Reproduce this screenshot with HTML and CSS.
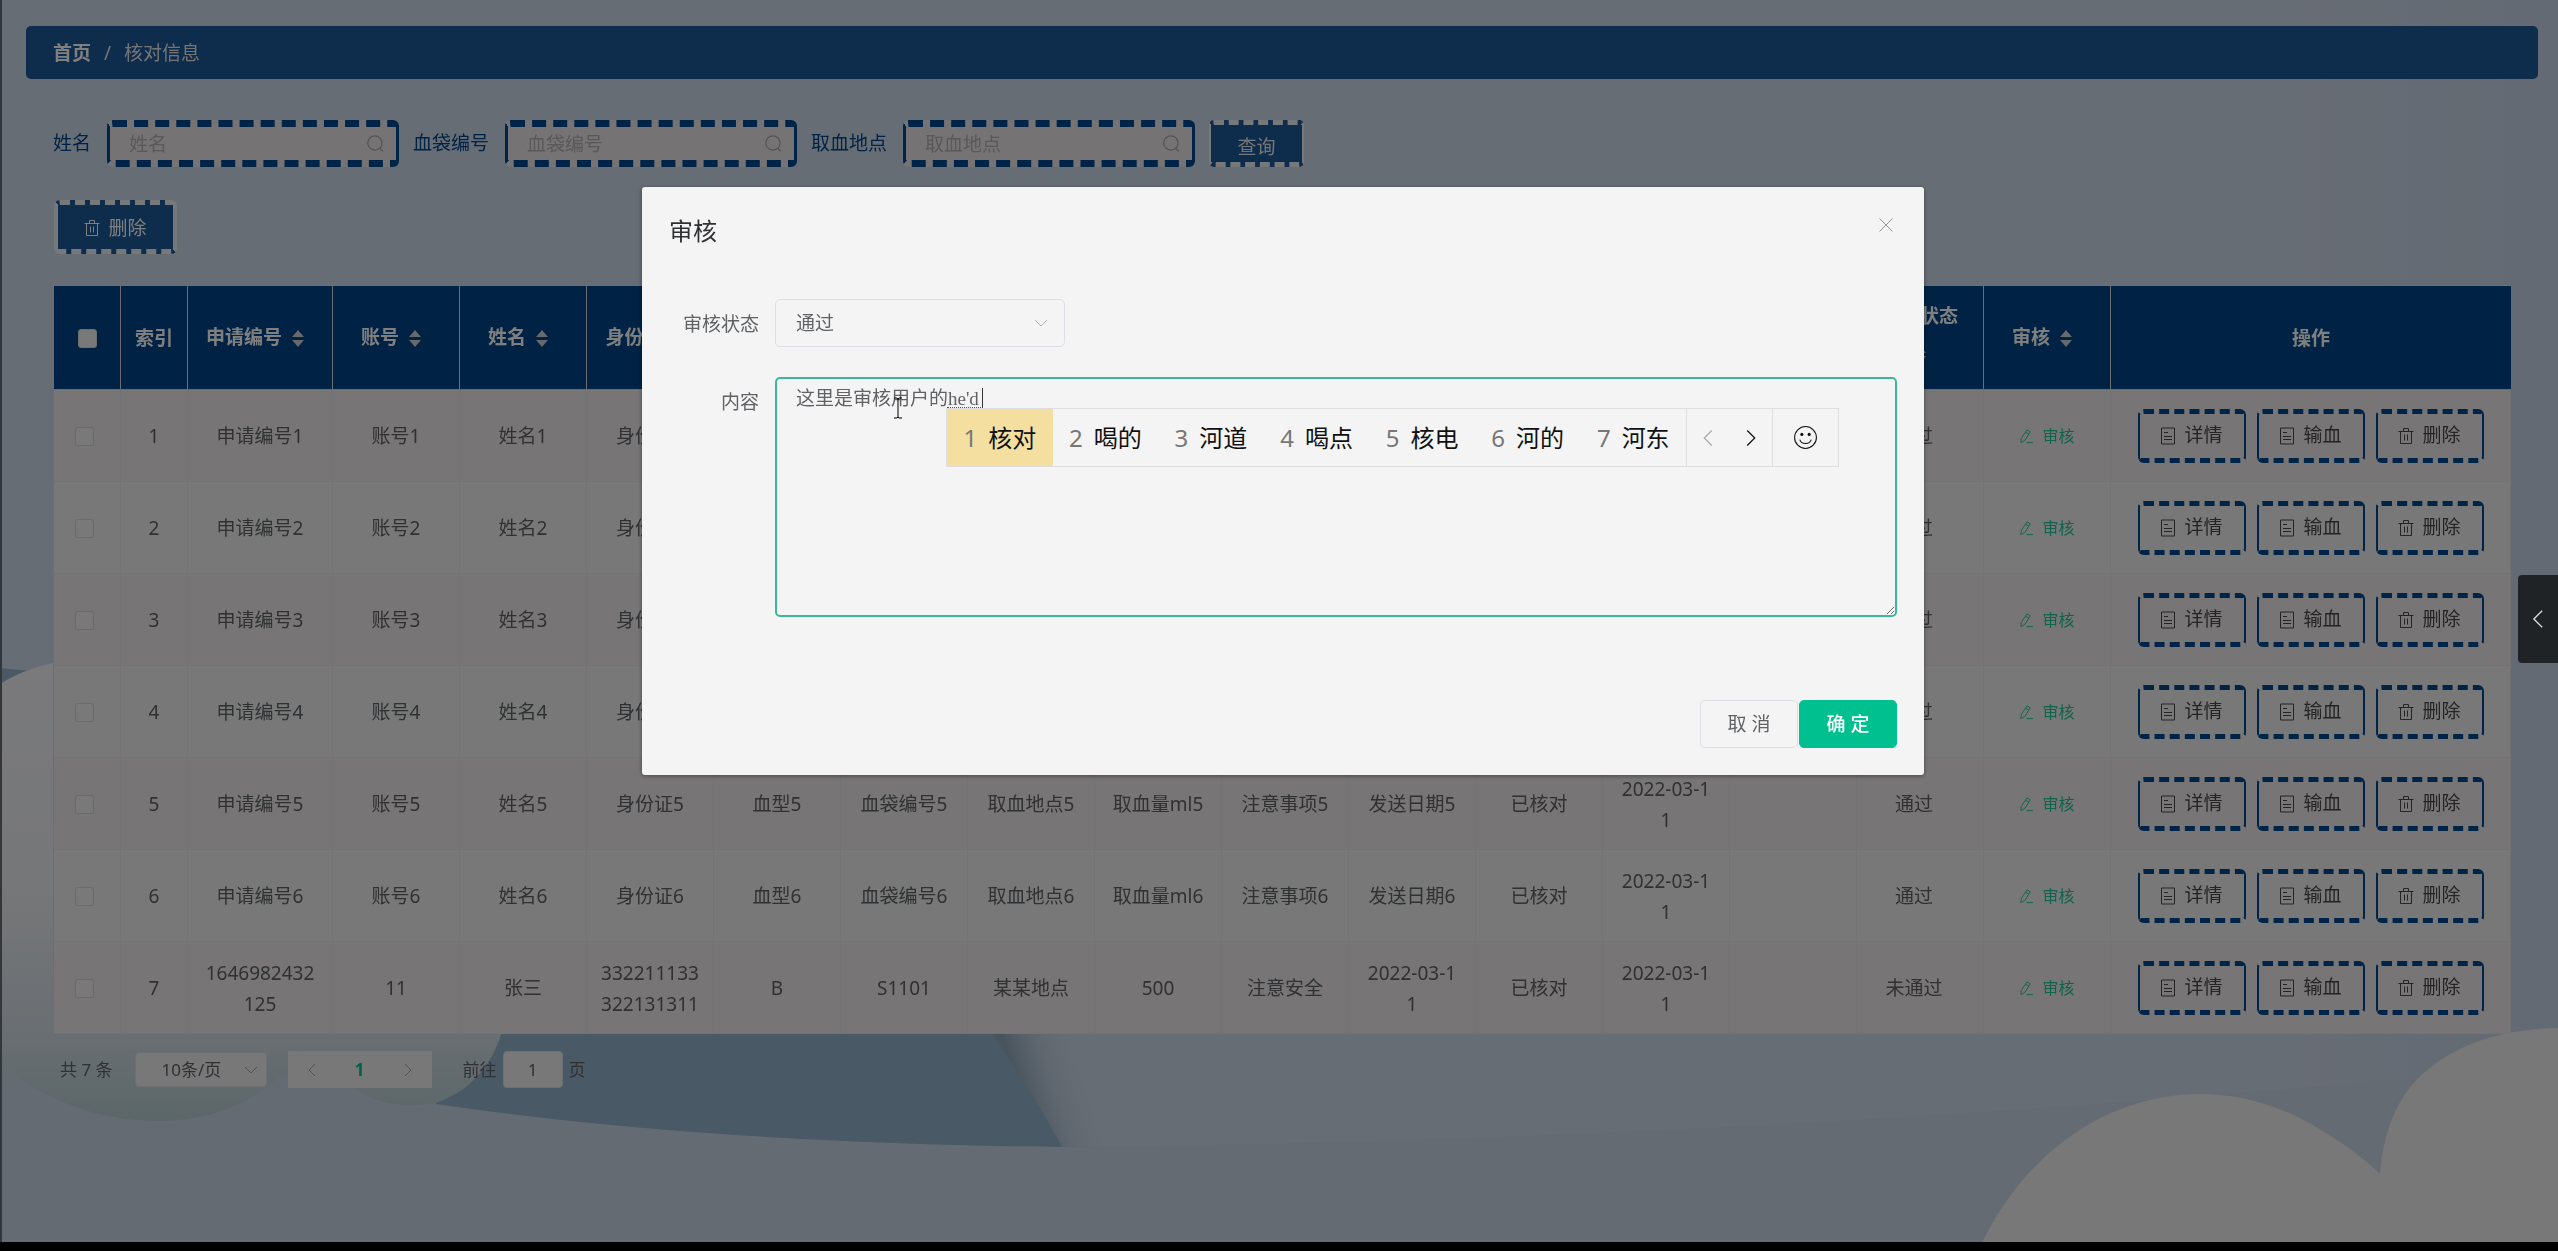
FILE: index.html
```html
<!DOCTYPE html>
<html lang="zh-CN">
<head>
<meta charset="UTF-8">
<meta name="viewport" content="width=device-width,initial-scale=1">
<title>核对信息</title>
<link rel="stylesheet" href="styles.css">
</head>
<body>

<svg class="icon-defs" width="0" height="0" aria-hidden="true">
  <symbol id="i-search" viewBox="0 0 16 16"><circle cx="7.500" cy="7.500" r="6"/><path d="M11.500 12L14 14.500"/></symbol>
  <symbol id="i-trash" viewBox="0 0 16 18"><path d="M.5 4.500h15M5.500 4.500V1.500h5v3M2.500 4.500v12h11v-12M6.500 7.500v6M9.500 7.500v6"/></symbol>
  <symbol id="i-doc" viewBox="0 0 16 18"><path d="M1.500 1h13v16h-13zM4 5.500h4M4 9.500h8M4 12.500h8"/></symbol>
  <symbol id="i-edit" viewBox="0 0 16 16"><path d="M8.500 1l3.500 2L6 12.500l-4 2 .5-4.500zM7 3.500l3.500 2M8 14.500h7"/></symbol>
  <symbol id="i-down" viewBox="0 0 16 16"><path d="M2 5l6 6 6-6"/></symbol>
  <symbol id="i-left" viewBox="0 0 16 16"><path d="M11 2L5 8l6 6"/></symbol>
  <symbol id="i-right" viewBox="0 0 16 16"><path d="M5 2l6 6-6 6"/></symbol>
  <symbol id="i-close" viewBox="0 0 16 16"><path d="M1.500 1.500l13 13M14.500 1.500l-13 13"/></symbol>
  <symbol id="i-smile" viewBox="0 0 24 24"><circle cx="12" cy="12" r="10.500"/><path d="M6.500 14c1.500 5 9.500 5 11 0"/><circle class="dot" cx="8.500" cy="9" r="1.500"/><circle class="dot" cx="15.500" cy="9" r="1.500"/></symbol>
</svg>

<!-- sky and clouds -->
<svg class="scene" viewBox="0 0 2558 1251" preserveAspectRatio="none" aria-hidden="true">
  <defs>
    <linearGradient id="side" x1="0" x2="1" y1="0" y2="0">
      <stop offset="0" stop-color="#cddaea"/><stop offset=".9" stop-color="#cfdaea"/><stop offset="1" stop-color="#c6d4e6"/>
    </linearGradient>
    <linearGradient id="bubble" gradientUnits="userSpaceOnUse" x1="0" x2="0" y1="660" y2="1121">
      <stop offset="0" stop-color="#f4f4f8"/><stop offset=".5" stop-color="#eceef2"/>
      <stop offset=".8" stop-color="#d4dee6"/><stop offset="1" stop-color="#b8ced4"/>
    </linearGradient>
    <linearGradient id="haze" gradientUnits="userSpaceOnUse" x1="1020" y1="1090" x2="1085" y2="1070">
      <stop offset="0" stop-color="#92aabc"/><stop offset="1" stop-color="#cfdaea" stop-opacity="0"/>
    </linearGradient>
  </defs>
  <rect width="2558" height="1251" fill="url(#side)"/>
  <path d="M0 1000Q500 1147 1070 1147Q1800 1140 2558 1064V1251H0z" fill="#cad6e6"/>
  <path d="M0 668L60 674V700H0z" fill="#92b2cc"/>
  <path d="M968 1000H1060Q1070 1090 1130 1148L1062 1147Q1020 1080 968 1000z" fill="url(#haze)"/>
  <path d="M400 1000H968Q1026 1080 1062 1147Q700 1143 436 1104z" fill="#92b2cc"/>
  <path d="M250 1000H508Q500 1080 436 1103Q385 1112 350 1086Q310 1060 307 1042Q295 1060 285 1075L250 1060z" fill="url(#bubble)"/>
  <path d="M0 684Q28 666 70 660V1000H310Q312 1030 290 1066Q240 1121 159 1121Q70 1121 0 1064z" fill="url(#bubble)"/>
  <path d="M1978 1251Q2020 1160 2100 1118Q2200 1070 2300 1118Q2350 1145 2380 1174Q2384 1120 2411 1086Q2460 1030 2558 1028V1251z" fill="#f0f0f0"/>
</svg>

<main class="page">
  <nav class="breadcrumb"><a href="#">首页</a><span class="sep">/</span><span>核对信息</span></nav>

  <div class="content">
    <form class="filters">
      <label for="fName">姓名</label>
      <div class="search"><input id="fName" type="text" placeholder="姓名"><svg><use href="#i-search"/></svg></div>
      <label for="fBag">血袋编号</label>
      <div class="search"><input id="fBag" type="text" placeholder="血袋编号"><svg><use href="#i-search"/></svg></div>
      <label for="fPlace">取血地点</label>
      <div class="search"><input id="fPlace" type="text" placeholder="取血地点"><svg><use href="#i-search"/></svg></div>
      <button type="button" class="btn-query">查询</button>
    </form>

    <button type="button" class="btn-delete"><svg><use href="#i-trash"/></svg>删除</button>

    <table class="list">
      <colgroup id="cols"></colgroup>
      <thead><tr id="head"></tr></thead>
      <tbody id="rows"></tbody>
    </table>

    <div class="pagination">
      <span class="total">共 7 条</span>
      <div class="size">
        <select aria-label="每页条数"><option>10条/页</option></select>
        <svg><use href="#i-down"/></svg>
      </div>
      <div class="pager">
        <button type="button" aria-label="上一页"><svg><use href="#i-left"/></svg></button>
        <button type="button" class="active">1</button>
        <button type="button" aria-label="下一页"><svg><use href="#i-right"/></svg></button>
      </div>
      <label for="jump">前往</label>
      <input id="jump" type="text" value="1">
      <span>页</span>
    </div>
  </div>
</main>

<div class="mask">
  <section class="dialog" role="dialog" aria-labelledby="dlgTitle">
    <header>
      <h2 id="dlgTitle">审核</h2>
      <button type="button" class="close" aria-label="关闭"><svg><use href="#i-close"/></svg></button>
    </header>
    <div class="dialog-body">
      <div class="form-item">
        <label for="state">审核状态</label>
        <div class="select">
          <select id="state"><option>通过</option></select>
          <svg><use href="#i-down"/></svg>
        </div>
      </div>
      <div class="form-item">
        <label for="reply">内容</label>
        <div class="reply">
          <textarea id="reply" spellcheck="false">这里是审核用户的he'd</textarea>
          <i class="composing"></i>
          <svg class="ibeam" viewBox="0 0 10 22"><path d="M1 1h3l1 1 1-1h3M5 2v18M1 21h3l1-1 1 1h3"/></svg>
          <div class="ime">
            <span class="cand on"><b>1</b>核对</span>
            <span class="cand"><b>2</b>喝的</span>
            <span class="cand"><b>3</b>河道</span>
            <span class="cand"><b>4</b>喝点</span>
            <span class="cand"><b>5</b>核电</span>
            <span class="cand"><b>6</b>河的</span>
            <span class="cand"><b>7</b>河东</span>
            <span class="turn">
              <button type="button" class="off" aria-label="上一组"><svg><use href="#i-left"/></svg></button>
              <button type="button" aria-label="下一组"><svg><use href="#i-right"/></svg></button>
            </span>
            <button type="button" class="face" aria-label="表情"><svg><use href="#i-smile"/></svg></button>
          </div>
        </div>
      </div>
    </div>
    <footer>
      <button type="button">取 消</button>
      <button type="button" class="primary">确 定</button>
    </footer>
  </section>
</div>

<button type="button" class="drawer" aria-label="展开"><svg><use href="#i-left"/></svg></button>
<div class="bottom-bar"></div>

<script>
  const heads = ['申请编号','账号','姓名','身份证','血型','血袋编号','取血地点','取血量ml','注意事项','发送日期','核对状态','核对日期','审核回复','审核状态','审核'];
  const data = [];
  for (let i = 1; i <= 6; i++) {
    data.push(['申请编号'+i,'账号'+i,'姓名'+i,'身份证'+i,'血型'+i,'血袋编号'+i,'取血地点'+i,'取血量ml'+i,'注意事项'+i,'发送日期'+i,'已核对','2022-03-11','','通过']);
  }
  data.push(['1646982432125','11','张三','332211133322131311','B','S1101','某某地点','500','注意安全','2022-03-11','已核对','2022-03-11','','未通过']);

  const icon = n => `<svg><use href="#i-${n}"/></svg>`;
  const btn = (n, t) => `<button type="button" class="op">${icon(n)}${t}</button>`;

  document.getElementById('cols').innerHTML =
    '<col class="w-s"><col class="w-s"><col class="w-m">' + '<col>'.repeat(14) + '<col class="w-l">';

  document.getElementById('head').innerHTML =
    '<th class="pick"><input type="checkbox" aria-label="全选"></th><th class="idx">索引</th>' +
    heads.map(h => `<th>${h}<span class="sort"><i class="up"></i><i class="down"></i></span></th>`).join('') +
    '<th>操作</th>';

  document.getElementById('rows').innerHTML = data.map((r, i) =>
    `<tr><td class="pick"><input type="checkbox" aria-label="选择${i + 1}"></td><td class="idx">${i + 1}</td>` +
    r.map((c, n) => `<td${n == 13 ? ' class="state"' : ''}>${c}</td>`).join('') +
    `<td><a class="audit" href="#">${icon('edit')}审核</a></td>` +
    `<td class="act"><div class="ops">${btn('doc','详情')}${btn('doc','输血')}${btn('trash','删除')}</div></td></tr>`
  ).join('');
</script>

</body>
</html>
```
FILE: styles.css
```css
* { box-sizing:border-box; }
html,body { margin:0; padding:0; height:100%; overflow:hidden; }
body { background:#cfdaea; font:19px/31px "Noto Sans","Noto Sans CJK SC",sans-serif; color:#606266; border-top:1px solid #777; }
button,input,select,textarea { font:inherit; color:inherit; margin:0; outline:none; }
button { cursor:pointer; display:inline-flex; align-items:center; justify-content:center; padding:0; background:none; border:0; }
a { text-decoration:none; color:inherit; }
svg { fill:none; stroke:currentColor; flex:none; }
svg .dot { fill:currentColor; stroke:none; }
.icon-defs { position:absolute; }
.scene { position:fixed; top:0; left:0; width:100%; height:100%; stroke:none; }

.page { position:relative; padding:25px 20px 0 26px; }
.breadcrumb { display:flex; align-items:center; height:53px; padding:1px 27px 0; border-radius:5px; background:#1c5896; color:#e4e8ec; }
.breadcrumb a { font-weight:bold; color:#fff; }
.breadcrumb .sep { margin:0 13px; }
.content { padding:41px 27px 0 27px; }

.filters { display:flex; align-items:center; color:#004488; }
.filters label { margin-right:16px; }
.search { position:relative; width:292px; margin-right:14px; }
.search input { display:block; width:100%; height:47px; padding:0 40px 0 19px; border:solid #004890; border-width:7px 3px; border-style:dashed solid; border-radius:6px; background:#ebe7e7; }
.search input::placeholder { color:#b4b2b2; opacity:1; }
.search svg { position:absolute; right:14px; top:14px; width:19px; height:19px; color:#a4a4a8; }
.btn-query { width:95px; height:47px; padding-top:8px; border:solid #eef0f2; border-width:5px 2px; border-style:dashed solid; border-radius:5px; background:#1c5896; color:#e8ecf0; }
.btn-delete { width:123px; height:54px; margin:33px 0 31px 1px; padding-top:2px; gap:8px; border:solid #eef0f2; border-width:5px 4px; border-style:dashed solid; border-radius:6px; background:#1c5896; color:#fff; }
.btn-delete svg { width:16px; height:18px; }

.list { width:100%; table-layout:fixed; border-collapse:separate; border-spacing:0; text-align:center; border-top:1px solid #d8dce4; border-left:1px solid #d8dce4; }
.w-s { width:67px; }
.w-m { width:145px; }
.w-l { width:400px; }
.list th { height:104px; padding:14px 13px 12px; border-right:1px solid #d8dce4; border-bottom:1px solid #d8dce4; background:#004488; color:#fff; font-weight:bold; }
.list th:last-child { border-right:0; }
.list td { height:92px; padding:2px 14px 0; border-right:1px solid #e6e4ea; border-bottom:1px solid #e6e4ea; background:#eeebeb; word-break:break-all; }
.list tr:nth-child(even) td { background:#eef0ee; }
.list input { display:block; appearance:none; width:19px; height:19px; margin:0 auto; border:1px solid #dcdcde; border-radius:3px; background:#f4f2f2; }
.list .pick,.list .idx { padding:2px 0 0; }
.list td.pick { padding-right:5px; }
.list td.pick input { border-color:#d4d2d6; }
.list .state { padding-right:26px; }
.list .act { padding:0; }
.sort { display:inline-flex; flex-direction:column; align-items:center; justify-content:center; gap:3px; width:32px; height:45px; vertical-align:middle; }
.sort i { border:solid transparent; border-width:0 6px; }
.sort .up { border-bottom:7px solid #d0d2d6; }
.sort .down { border-top:7px solid #d0d2d6; }
.audit { display:inline-flex; align-items:center; gap:8px; font-size:16px; color:#20c898; }
.audit svg { width:15px; height:15px; }
.ops { display:flex; justify-content:center; gap:11px; }
.op { width:108px; height:54px; gap:8px; border:solid #004890; border-width:5px 2px; border-style:dashed solid; border-radius:6px; color:#484848; }
.op svg { width:16px; height:18px; }

.pagination { display:flex; align-items:center; height:37px; margin-top:17px; padding-left:7px; font-size:17px; }
.pagination svg { width:16px; height:16px; color:#a0a2a8; }
.size { position:relative; width:132px; margin:0 21px 0 22px; }
.size select { display:block; width:100%; height:35px; padding:0 0 0 26px; appearance:none; border:1px solid #dcdfe6; border-radius:4px; background:#f2f0f0; }
.size svg { position:absolute; right:8px; top:10px; }
.pager { display:flex; width:144px; height:37px; margin-right:31px; background:#f2f0f0; }
.pager button { flex:1; }
.pager .active { color:#00c292; font-weight:bold; }
.pagination input { width:60px; height:37px; margin:0 6px; padding:0; text-align:center; border:1px solid #dcdfe6; border-radius:4px; background:#f2f0f0; }

.mask { position:fixed; top:0; left:0; right:0; bottom:0; display:flex; justify-content:center; align-items:flex-start; padding:187px 0 0 6px; background:rgba(0,0,0,.5); border-left:2px solid #33373c; }
.dialog { width:1282px; max-width:90%; border-radius:3px; background:#f4f4f4; box-shadow:0 1px 4px rgba(0,0,0,.4); }
.dialog header { display:flex; align-items:flex-start; justify-content:space-between; padding:27px 27px 13px; }
.dialog h2 { margin:0; font-size:24px; line-height:34px; font-weight:normal; color:#303133; }
.close svg { width:16px; height:16px; margin:3px; color:#909399; }
.dialog-body { padding:38px 27px 42px; }
.form-item { display:flex; margin-bottom:28px; }
.form-item label { width:106px; padding-right:16px; line-height:50px; text-align:right; flex:none; }
.select { position:relative; width:290px; }
.select select { display:block; width:100%; height:48px; padding:1px 20px 0; appearance:none; border:1px solid #dcdfe6; border-radius:5px; background:#f4f4f4; }
.select svg { position:absolute; right:16px; top:16px; width:16px; height:16px; color:#b0b4bc; }
.reply { position:relative; flex:1; }
.reply textarea { display:block; width:100%; height:240px; padding:6px 19px; border:2px solid #3cb79c; border-radius:5px; background:#f4f4f4; font:19px/28px "Liberation Serif","Noto Sans CJK SC",serif; resize:vertical; }
/* uncommitted pinyin: dotted underline plus caret */
.composing { position:absolute; left:172px; top:11px; width:36px; height:20px; border-right:1px solid #333; border-bottom:1px dotted #555; }
.ibeam { position:absolute; left:118px; top:20px; width:10px; height:22px; color:#000; }
.ime { position:absolute; left:171px; top:31px; display:flex; width:893px; height:59px; border:1px solid #dedede; background:#f4f4f4; font-size:24px; color:#111; }
.cand { flex:1; display:flex; align-items:center; justify-content:center; gap:11px; }
.cand b { font-weight:normal; color:#777; }
.cand.on { background:#f5dfa0; }
.turn { display:flex; width:87px; border:solid #dedede; border-width:0 1px; }
.turn button { flex:1; }
.turn svg { width:20px; height:20px; }
.turn .off { color:#aaa; }
.face { width:65px; }
.face svg { width:25px; height:25px; }
.dialog footer { display:flex; justify-content:flex-end; gap:1px; padding:13px 27px 27px; }
.dialog footer button { width:98px; height:48px; border:1px solid #dcdfe6; border-radius:5px; }
.dialog footer .primary { border-color:#00c090; background:#00c090; color:#fff; font-weight:500; }

.drawer { position:fixed; right:0; top:575px; width:40px; height:88px; border-radius:4px 0 0 4px; background:#202326; color:#ddd; }
.drawer svg { width:22px; height:22px; }
.bottom-bar { position:fixed; left:0; right:0; bottom:0; height:9px; background:#000; }
```
